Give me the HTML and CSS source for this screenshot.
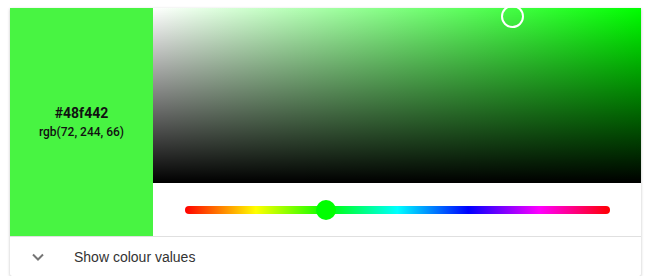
FILE: index.html
```html
<!DOCTYPE html>
<html lang="en">
<head>
    <meta charset="UTF-8">
    <title>Colour picker</title>
    <link rel="stylesheet" href="styles.css">
</head>
<body>
    <div class="picker">
        <div class="picker-main">
            <div class="swatch">
                <div class="swatch-hex">#48f442</div>
                <div class="swatch-rgb">rgb(72, 244, 66)</div>
            </div>
            <div class="controls">
                <div class="saturation">
                    <div class="sat-thumb"></div>
                </div>
                <div class="hue-row">
                    <div class="hue-track">
                        <div class="hue-thumb"></div>
                    </div>
                </div>
            </div>
        </div>
        <div class="picker-footer">
            <svg class="chevron" width="14" height="14" viewBox="0 0 14 14">
                <path d="M2 4.5 L7 9.5 L12 4.5" fill="none" stroke="#757575" stroke-width="2"/>
            </svg>
            <span class="footer-label">Show colour values</span>
        </div>
    </div>
</body>
</html>
```

FILE: styles.css
```css
body {
    margin: 0;
    padding: 8px 16px 0 10px;
    background: #fff;
    font-family: "Liberation Sans", Arial, sans-serif;
}

.picker {
    width: 631px;
    background: #fff;
    box-shadow: 0 1px 3px rgba(0,0,0,0.25);
    border-radius: 0 0 2px 2px;
}

.picker-main {
    display: flex;
    height: 228px;
}

.swatch {
    width: 143px;
    background-color: #48f442;
    display: flex;
    flex-direction: column;
    align-items: center;
    justify-content: center;
    color: #111;
    font-family: Roboto, "Liberation Sans", sans-serif;
}

.swatch-hex {
    font-size: 14px;
    font-weight: bold;
    margin-bottom: 4px;
}

.swatch-rgb {
    font-size: 12px;
    font-weight: 500;
}

.controls {
    flex: 1;
    display: flex;
    flex-direction: column;
}

.saturation {
    position: relative;
    height: 175px;
    background:
        linear-gradient(to bottom, rgba(0,0,0,0), #000),
        linear-gradient(to right, #fff, #00ff00);
}

.sat-thumb {
    position: absolute;
    left: 348px;
    top: -3px;
    width: 19px;
    height: 19px;
    border: 2px solid #fff;
    border-radius: 50%;
}

.hue-row {
    flex: 1;
    display: flex;
    align-items: center;
    padding: 0 31px 0 32px;
}

.hue-track {
    position: relative;
    flex: 1;
    height: 8px;
    border-radius: 4px;
    background: linear-gradient(to right, #f00, #ff0, #0f0, #0ff, #00f, #f0f, #f00);
}

.hue-thumb {
    position: absolute;
    left: 131px;
    top: -6px;
    width: 20px;
    height: 20px;
    border-radius: 50%;
    background: #00ff00;
}

.picker-footer {
    display: flex;
    align-items: center;
    height: 40px;
    border-top: 1px solid #e0e0e0;
    box-sizing: border-box;
}

.chevron {
    margin-left: 21px;
}

.footer-label {
    margin-left: 29px;
    font-size: 14px;
    color: #333;
}
```
